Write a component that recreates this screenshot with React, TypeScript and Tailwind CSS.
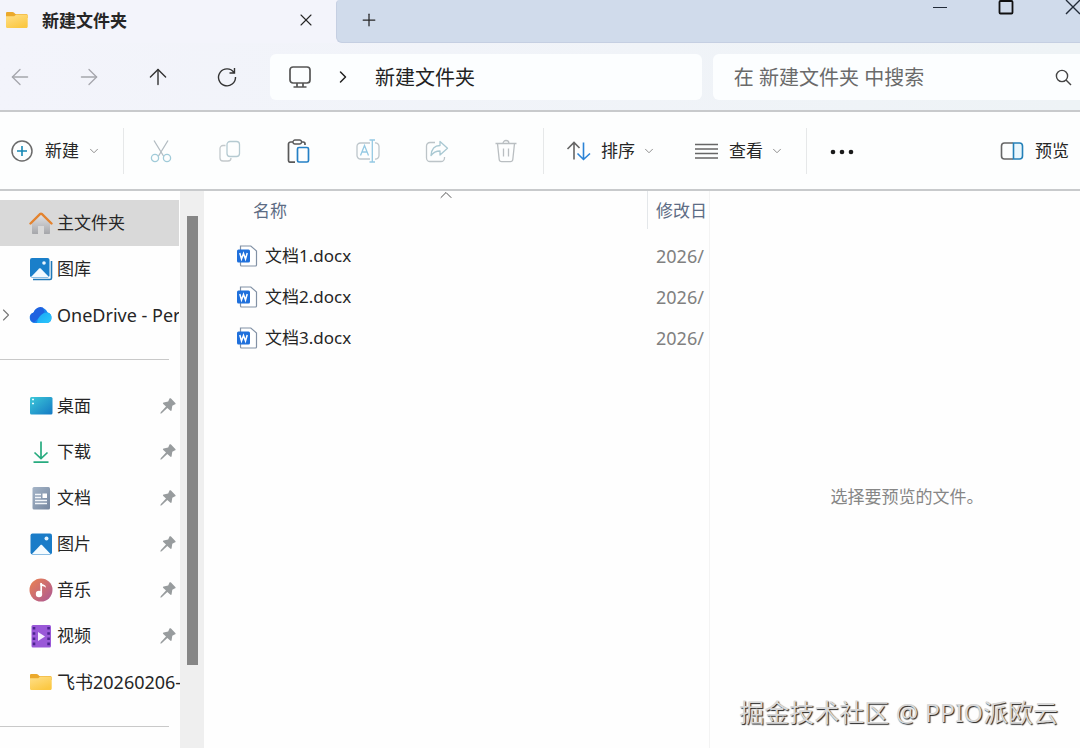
import type { ReactNode } from "react";
import { ArrowLeft, ArrowRight, ArrowUp, ChevronDown, ChevronRight, ChevronUp, Plus, X } from "lucide-react";

const FolderIcon = () => (
    <svg width="24" height="24" viewBox="0 0 24 24" aria-hidden="true">
        <defs>
            <linearGradient id="folder" x1="0" y1="0" x2="0.6" y2="1">
                <stop offset="0" stopColor="#ffe08a" />
                <stop offset="1" stopColor="#fbc843" />
            </linearGradient>
        </defs>
        <path d="M1 5.2C1 4.4 1.600 4 2.300 4h5.200c.6 0 1 .2 1.400.6L10.400 6H21c1.100 0 1.700.6 1.700 1.600V10H1z" fill="#eba92c" />
        <path d="M1 8.300h7.500c.6 0 .9-.2 1.300-.6l.8-.8c.3-.3.6-.4 1-.4H21.500c.8 0 1.200.5 1.200 1.200V18.500c0 .9-.5 1.500-1.400 1.500H2.400C1.500 20 1 19.400 1 18.500z" fill="url(#folder)" />
    </svg>
);

const HomeIcon = () => (
    <svg width="24" height="24" viewBox="0 0 24 24" aria-hidden="true">
        <defs>
            <linearGradient id="house" x1="0" y1="0" x2="0" y2="1">
                <stop offset="0" stopColor="#e2e2e4" />
                <stop offset="1" stopColor="#a5a6aa" />
            </linearGradient>
        </defs>
        <path d="M12 3.500 3 12v10c0 .7.4 1 1 1h5v-8h6v8h5c.600 0 1-.3 1-1V12z" fill="url(#house)" />
        <path d="m1.500 12.500 9.700-9.500c.5-.4 1.100-.4 1.600 0l9.700 9.500" fill="none" stroke="#e3832f" strokeWidth="2.400" strokeLinecap="round" />
    </svg>
);

const GalleryIcon = () => (
    <svg width="24" height="24" viewBox="0 0 24 24" aria-hidden="true">
        <path d="M22.500 4v17c0 .9-.6 1.500-1.500 1.500H4" fill="none" stroke="#2079b8" strokeWidth="1.600" />
        <rect x="1" y="1" width="19.500" height="19.500" rx="2" fill="#1a7fca" />
        <path d="m2 20 8.200-8.400c.5-.5 1-.5 1.500 0L20 20z" fill="#f2faff" />
        <circle cx="15" cy="6" r="1.800" fill="#eaf6ff" />
    </svg>
);

const OneDriveIcon = () => (
    <svg width="24" height="24" viewBox="0 0 24 24" aria-hidden="true">
        <defs>
            <linearGradient id="cloud" x1="0" y1="0" x2="1" y2="1">
                <stop offset="0" stopColor="#1ba5f5" />
                <stop offset="1" stopColor="#2ac8fb" />
            </linearGradient>
        </defs>
        <path d="M6 20a5.200 5.200 0 0 1-1.500-10.200A7.500 7.500 0 0 1 18.600 9.500 5.400 5.400 0 0 1 18 20z" fill="#1a86ee" />
        <path d="M4.500 9.600A7.500 7.500 0 0 1 14 4.500L15.500 9 5 19.500A5.200 5.200 0 0 1 4.500 9.600z" fill="#1f62e0" />
        <path d="M8 20c1-6 5-10.500 10.600-10.500A5.400 5.400 0 0 1 18 20z" fill="url(#cloud)" />
    </svg>
);

const DesktopIcon = () => (
    <svg width="24" height="24" viewBox="0 0 24 24" aria-hidden="true">
        <defs>
            <linearGradient id="desk" x1="0" y1="0" x2="1" y2="1">
                <stop offset="0" stopColor="#3cc8d8" />
                <stop offset="1" stopColor="#1479c4" />
            </linearGradient>
        </defs>
        <rect x="1" y="3" width="22.500" height="17.500" rx="1.500" fill="url(#desk)" />
        <path d="M3 5.500h2M3 9.500h2" stroke="#e6fbff" strokeWidth="1.500" />
    </svg>
);

const DownloadIcon = () => (
    <svg width="24" height="24" viewBox="0 0 24 24" fill="none" stroke="#27ab7f" strokeWidth="1.700" aria-hidden="true">
        <path d="M12 1.500v17M5.500 12.500l6.500 6 6.500-6M4.500 22.200h15" />
    </svg>
);

const DocumentIcon = () => (
    <svg width="24" height="24" viewBox="0 0 24 24" aria-hidden="true">
        <defs>
            <linearGradient id="doc" x1="0" y1="0" x2="1" y2="1">
                <stop offset="0" stopColor="#a5b5c8" />
                <stop offset="1" stopColor="#74859e" />
            </linearGradient>
        </defs>
        <rect x="3.500" y="1" width="17.500" height="22.500" rx="1.500" fill="url(#doc)" />
        <path d="M6 8.500h6M6 11.500h6M6 14.500h12M6 17.500h12" stroke="#f3f6fa" strokeWidth="1.300" />
        <rect x="13.500" y="7.500" width="4.500" height="4.500" fill="#fff" />
    </svg>
);

const PicturesIcon = () => (
    <svg width="24" height="24" viewBox="0 0 24 24" aria-hidden="true">
        <rect x="1.500" y="1.500" width="21.500" height="21" rx="2" fill="#1a7cc8" />
        <path d="m3 22 8.500-9c.5-.5 1-.5 1.500 0l8.500 9z" fill="#f4fbff" />
        <circle cx="17.500" cy="6.500" r="2" fill="#dff2ff" />
    </svg>
);

const MusicIcon = () => (
    <svg width="24" height="24" viewBox="0 0 24 24" aria-hidden="true">
        <defs>
            <linearGradient id="music" x1="0" y1="0" x2="1" y2="1">
                <stop offset="0" stopColor="#ec8350" />
                <stop offset="1" stopColor="#ab5796" />
            </linearGradient>
        </defs>
        <circle cx="12" cy="12" r="11.500" fill="url(#music)" />
        <path d="M12.200 5v10.500" stroke="#fff" strokeWidth="1.700" />
        <path d="M11.400 4.500c1 2.200 5.400 1.600 5.400 4.500v.8c-1.300-1.600-3.600-1.300-5.400-2.200z" fill="#fff" />
        <circle cx="10" cy="16" r="3.200" fill="#fff" />
    </svg>
);

const VideoIcon = () => (
    <svg width="24" height="24" viewBox="0 0 24 24" aria-hidden="true">
        <rect x="2.500" y="1" width="19.500" height="22.500" rx="1.500" fill="#9a58d8" />
        <path d="M5 3v19M19.600 3v19" stroke="#4c2490" strokeWidth="2.600" strokeDasharray="2.600 2.600" />
        <path d="M9 8v9l7-4.500z" fill="#f5edff" />
    </svg>
);

const PinIcon = () => (
    <svg width="16" height="16" viewBox="0 0 16 16" fill="#989c9e" aria-hidden="true">
        <path d="M9.500.6c.5-.5 1-.5 1.500 0l4.300 4.300c.5.5.4 1.100-.2 1.400L12.300 7.700 11.600 12.200c-.1.800-.8 1-1.400.4L7.300 9.900 1.700 15.300.4 15.700.7 14.300 6 8.600 3.300 6c-.6-.6-.4-1.300.4-1.400L8.200 3.500z" />
    </svg>
);

const WordIcon = () => (
    <svg width="22" height="22" viewBox="0 0 22 22" aria-hidden="true">
        <path d="M4.500 1h10.300L20.500 6v14c0 .6-.4 1-1 1h-14c-.6 0-1-.4-1-1z" fill="#fff" stroke="#8291a5" strokeWidth="1.200" />
        <rect x="1" y="4.500" width="13" height="13" rx="1.500" fill="#1f70dc" />
        <path d="m3.800 8 1.700 6 2-5.500 2 5.500 1.700-6" fill="none" stroke="#fff" strokeWidth="1.500" />
    </svg>
);

const actions: { label: string; icon: ReactNode }[] = [
    {
        label: "剪切",
        icon: (
            <g stroke="#b3bcc2">
                <path d="m5 1.500 9.800 16M19 1.500l-9.800 16" />
                <g stroke="#a0cbd9">
                    <circle cx="6" cy="19" r="3.600" />
                    <circle cx="18" cy="19" r="3.600" />
                </g>
            </g>
        ),
    },
    {
        label: "复制",
        icon: (
            <>
                <path d="M7.500 6.500H5a3 3 0 0 0-3 3V19a3 3 0 0 0 3 3h5a3 3 0 0 0 3-3" stroke="#c3c9cc" />
                <rect x="9" y="2.500" width="12.500" height="15" rx="3" stroke="#b5cad1" />
            </>
        ),
    },
    {
        label: "粘贴",
        icon: (
            <>
                <path d="M6 3H3.800C2.500 3 1.500 3.800 1.500 5v16.500c0 1 .8 1.700 1.800 1.700H8M14.500 3h1.700c1 0 1.800.8 1.800 1.800V6" stroke="#595959" strokeWidth="1.700" />
                <rect x="6" y="1" width="8.500" height="4" rx="2" stroke="#595959" />
                <rect x="10.500" y="8.500" width="11" height="14.500" rx="1.500" stroke="#2480c5" strokeWidth="1.700" />
            </>
        ),
    },
    {
        label: "重命名",
        icon: (
            <>
                <path d="M14 4H4.500a3.500 3.500 0 0 0-3.500 3.500v9A3.500 3.500 0 0 0 4.500 20H14M19 4a3.500 3.500 0 0 1 4 3.500v9A3.500 3.500 0 0 1 19 20" stroke="#bdc6cb" />
                <path d="m4.500 16.500 4-10 4 10M6 13h5M13.500 1H19M16.300 1v22M13.500 23H19" stroke="#94c9e3" />
            </>
        ),
    },
    {
        label: "共享",
        icon: (
            <>
                <path d="M10 3.500H5A3.500 3.500 0 0 0 1.500 7v12A3.500 3.500 0 0 0 5 22.500h11a3.500 3.500 0 0 0 3.500-3.500v-1" stroke="#bcc4c8" />
                <path d="M15 2.500v4C10 6.500 6.500 10 6 16.500c2.500-3.500 5-4.500 9-4.500v4l7.500-6.700z" stroke="#a9c8d2" strokeLinejoin="round" />
            </>
        ),
    },
    {
        label: "删除",
        icon: (
            <g stroke="#b9bec1">
                <path d="M1.500 4.500h21M9 4.500a3 3 0 0 1 6 0M3.500 4.500l1.700 16a2.500 2.500 0 0 0 2.500 2.200h8.600a2.500 2.500 0 0 0 2.500-2.200l1.700-16M9.500 9.500v8M14.500 9.500v8" />
            </g>
        ),
    },
];

const places = [
    { label: "主文件夹", icon: <HomeIcon />, active: true },
    { label: "图库", icon: <GalleryIcon /> },
    { label: "OneDrive - Per", icon: <OneDriveIcon />, expandable: true, latin: true },
];

const pinned = [
    { label: "桌面", icon: <DesktopIcon />, pin: true },
    { label: "下载", icon: <DownloadIcon />, pin: true },
    { label: "文档", icon: <DocumentIcon />, pin: true },
    { label: "图片", icon: <PicturesIcon />, pin: true },
    { label: "音乐", icon: <MusicIcon />, pin: true },
    { label: "视频", icon: <VideoIcon />, pin: true },
    { label: "飞书20260206-", icon: <FolderIcon />, latin: true },
];

const files = [
    { name: "文档1.docx", modified: "2026/" },
    { name: "文档2.docx", modified: "2026/" },
    { name: "文档3.docx", modified: "2026/" },
];

type PlaceProps = { label: string; icon: ReactNode; active?: boolean; expandable?: boolean; latin?: boolean; pin?: boolean };

function PlaceRow({ label, icon, active, expandable, latin, pin }: PlaceProps) {
    return (
        <li>
            <a href="#" className={`flex h-[46px] items-center overflow-hidden whitespace-nowrap ${active ? "bg-[#d9d9d9]" : ""}`}>
                <span className="w-[29px] shrink-0">
                    {expandable && <ChevronRight size={20} strokeWidth={1.3} className="-ml-1 text-[#777]" />}
                </span>
                <span className="mr-1 shrink-0">{icon}</span>
                <span className={latin ? "flex-1 text-lg leading-6" : "flex-1"}>{label}</span>
                {pin && <span className="mr-1 shrink-0"><PinIcon /></span>}
            </a>
        </li>
    );
}

function TabStrip() {
    return (
        <header className="flex h-[43px] bg-[#f3f4fb]">
            <div className="flex w-[336px] shrink-0 items-center pb-[3px] pl-[5px]">
                <FolderIcon />
                <h1 className="ml-[13px] flex-1 pt-0.5 text-[17px] font-bold">新建文件夹</h1>
                <button aria-label="关闭标签页" className="mr-5">
                    <X size={20} strokeWidth={1.3} />
                </button>
            </div>
            <div className="flex flex-1 items-start justify-between overflow-hidden rounded-bl-md rounded-tl-sm border-b border-l border-[#c5cfe2] bg-[#d0dbeb]">
                <button aria-label="新建标签页" className="ml-[22px] mt-[10px]">
                    <Plus size={20} strokeWidth={1.5} />
                </button>
                <div className="flex gap-[50px]">
                    <button aria-label="最小化">
                        <svg width="16" height="16" viewBox="0 0 16 16" stroke="#222b38"><path d="M1 7.500h14" /></svg>
                    </button>
                    <button aria-label="最大化">
                        <svg width="16" height="16" viewBox="0 0 16 16" fill="none" stroke="#111" strokeWidth="1.800"><rect x="1.500" y="1" width="13" height="12.500" rx="1" /></svg>
                    </button>
                    <button aria-label="关闭">
                        <svg width="16" height="16" viewBox="0 0 16 16" stroke="#222b38" strokeWidth="1.400"><path d="m2 0 14 14M16 0 2 14" /></svg>
                    </button>
                </div>
            </div>
        </header>
    );
}

function AddressRow() {
    return (
        <nav className="flex h-[67px] items-center bg-gradient-to-r from-[#f3f4fb] to-[#eef3f6] pt-px text-xl">
            <div className="mr-[23px] flex shrink-0 items-center gap-[29px] text-[#333]">
                <button aria-label="后退" className="flex w-10 justify-center text-[#a5a6ac]"><ArrowLeft size={26} strokeWidth={1.2} /></button>
                <button aria-label="前进" className="flex w-10 justify-center text-[#a5a6ac]"><ArrowRight size={26} strokeWidth={1.2} /></button>
                <button aria-label="向上" className="flex w-10 justify-center"><ArrowUp size={26} strokeWidth={1.3} /></button>
                <button aria-label="刷新" className="flex w-10 justify-center">
                    <svg width="22" height="22" viewBox="0 0 22 22" fill="none" stroke="currentColor" strokeWidth="1.400">
                        <path d="M18 6.500A8.500 8.500 0 1 0 19.500 11M18.500 2v5H13.500" />
                    </svg>
                </button>
            </div>
            <div className="mr-[11px] flex h-[46px] flex-1 items-center rounded-md bg-[#fcfeff] pl-[18px]">
                <svg width="24" height="24" viewBox="0 0 24 24" fill="none" stroke="#555" strokeWidth="1.700" aria-hidden="true">
                    <rect x="2" y="2" width="20" height="16" rx="3" />
                    <path d="M9 18v3.500M15 18v3.500M5.500 22h13" />
                </svg>
                <ChevronRight size={20} strokeWidth={1.8} className="ml-[21px] mr-[22px] text-[#222]" />
                <button className="whitespace-nowrap pt-0.5 text-[#222]">新建文件夹</button>
            </div>
            <div className="flex h-[46px] w-[34%] items-center rounded-l-md bg-[#fcfeff] pl-[21px] pr-2">
                <input type="search" aria-label="搜索" placeholder="在 新建文件夹 中搜索" className="min-w-0 flex-1 bg-transparent pt-0.5 outline-none placeholder:text-[#6a6a6a]" />
                <svg width="18" height="18" viewBox="0 0 18 18" fill="none" stroke="#444" strokeWidth="1.400" aria-hidden="true">
                    <circle cx="8" cy="8" r="5.600" />
                    <path d="m12 12 5 5" />
                </svg>
            </div>
        </nav>
    );
}

const Divider = () => <span className="h-[46px] w-px shrink-0 bg-[#e6e8e9]" />;

function Toolbar() {
    return (
        <div role="toolbar" className="flex h-[81px] items-center overflow-hidden whitespace-nowrap border-y-2 border-[#c8cacc] bg-[#fdfefe]">
            <button className="flex w-[123px] shrink-0 items-center pl-[10px]">
                <svg width="24" height="24" viewBox="0 0 24 24" fill="none" aria-hidden="true">
                    <circle cx="12" cy="12" r="10" stroke="#6b6b6b" strokeWidth="1.500" />
                    <path d="M12 7v10M7 12h10" stroke="#1688b5" strokeWidth="1.600" />
                </svg>
                <span className="ml-[11px] mr-2">新建</span>
                <ChevronDown size={14} strokeWidth={1.6} className="text-[#888]" />
            </button>
            <Divider />
            <div className="flex shrink-0 pl-[2px] pr-[3px]">
                {actions.map((action) => (
                    <button key={action.label} aria-label={action.label} className="flex w-[69px] justify-center">
                        <svg width="24" height="24" viewBox="0 0 24 24" fill="none" strokeWidth="1.300">{action.icon}</svg>
                    </button>
                ))}
            </div>
            <Divider />
            <button className="ml-[22px] flex shrink-0 items-center">
                <svg width="26" height="24" viewBox="0 0 26 24" fill="none" strokeWidth="1.600" aria-hidden="true">
                    <path d="M8 20.500V3.500M1.500 10 8 3.500l5.500 5.500" stroke="#666" />
                    <path d="M17.500 3.500v17M11.500 14.500l6 6 6.500-6" stroke="#2b83d6" />
                </svg>
                <span className="ml-[9px] mr-[7px]">排序</span>
                <ChevronDown size={14} strokeWidth={1.6} className="text-[#888]" />
            </button>
            <button className="ml-[39px] flex shrink-0 items-center">
                <svg width="24" height="24" viewBox="0 0 24 24" stroke="#666" strokeWidth="1.300" aria-hidden="true">
                    <path d="M0 5.500h23M0 10h23M0 14.500h23M0 19h23" />
                </svg>
                <span className="ml-[10px] mr-[7px]">查看</span>
                <ChevronDown size={14} strokeWidth={1.6} className="text-[#888]" />
            </button>
            <span className="w-[22px] shrink-0" />
            <Divider />
            <button aria-label="更多" className="ml-[22px] shrink-0">
                <svg width="26" height="24" viewBox="0 0 26 24" fill="#1a1a1a">
                    <circle cx="4" cy="13" r="2.300" />
                    <circle cx="13" cy="13" r="2.300" />
                    <circle cx="22" cy="13" r="2.300" />
                </svg>
            </button>
            <button className="ml-auto flex shrink-0 items-center pr-[11px]">
                <svg width="24" height="24" viewBox="0 0 24 24" fill="none" strokeWidth="1.600" aria-hidden="true">
                    <path d="M13 4H4.500A3 3 0 0 0 1.500 7v10a3 3 0 0 0 3 3H13" stroke="#666" />
                    <path d="M13.500 4h6a3 3 0 0 1 3 3v10a3 3 0 0 1-3 3h-6z" stroke="#2480b8" fill="#eaf7fd" />
                </svg>
                <span className="ml-[11px]">预览</span>
            </button>
        </div>
    );
}

function Sidebar() {
    return (
        <aside className="flex w-[204px] shrink-0">
            <div className="w-[180px] overflow-hidden pt-[9px]">
                <ul className="pr-px">
                    {places.map((place) => <PlaceRow key={place.label} {...place} />)}
                </ul>
                <hr className="mb-[23px] mr-[11px] mt-[21px] border-[#c9c9c9]" />
                <ul>
                    {pinned.map((place) => <PlaceRow key={place.label} {...place} />)}
                </ul>
                <hr className="mr-[11px] mt-[21px] border-[#c9c9c9]" />
            </div>
            {/* scrollbar */}
            <div className="flex w-6 flex-col items-center bg-[#efefef] pb-[83px] pt-[25px]">
                <div className="w-[11px] flex-1 bg-[#868686]" />
            </div>
        </aside>
    );
}

function FileList() {
    return (
        <section className="relative min-w-0 flex-1 overflow-hidden border-r border-[#f3f3f3]">
            <ChevronUp size={20} strokeWidth={1.2} className="absolute left-[232px] top-[-6px] text-[#555]" />
            <table className="w-full table-fixed whitespace-nowrap text-left">
                <thead>
                    <tr className="h-11 align-top text-[#5d6c84]">
                        <th className="pl-[49px] font-normal"><div className="h-10 leading-10">名称</div></th>
                        <th className="w-[62px] font-normal"><div className="h-[38px] overflow-hidden border-l border-[#e4e7ea] pl-2 leading-10">修改日</div></th>
                    </tr>
                </thead>
                <tbody>
                    {files.map((file) => (
                        <tr key={file.name} className="h-[41px]">
                            <td className="pl-8">
                                <div className="flex items-center gap-[7px]">
                                    <WordIcon />
                                    {file.name}
                                </div>
                            </td>
                            <td className="overflow-hidden pl-[9px] text-lg leading-6 text-[#808080]">{file.modified}</td>
                        </tr>
                    ))}
                </tbody>
            </table>
        </section>
    );
}

export default function App() {
    return (
        <div className="relative flex min-h-screen flex-col overflow-hidden bg-[#fefefe] font-['Noto_Sans','Noto_Sans_CJK_SC',sans-serif] text-[17px] leading-6 text-[#262626]">
            <TabStrip />
            <AddressRow />
            <Toolbar />
            <main className="flex flex-1">
                <Sidebar />
                <FileList />
                <section className="flex w-[370px] shrink-0 items-center justify-center pl-6 pt-[54px] text-[#868686]">
                    <p>选择要预览的文件。</p>
                </section>
            </main>
            <p className="absolute bottom-[18px] right-[22px] whitespace-nowrap text-[25px] leading-9 text-[#d8d8d8] [text-shadow:1px_1px_1px_#222]">
                掘金技术社区 @ PPIO派欧云
            </p>
        </div>
    );
}
